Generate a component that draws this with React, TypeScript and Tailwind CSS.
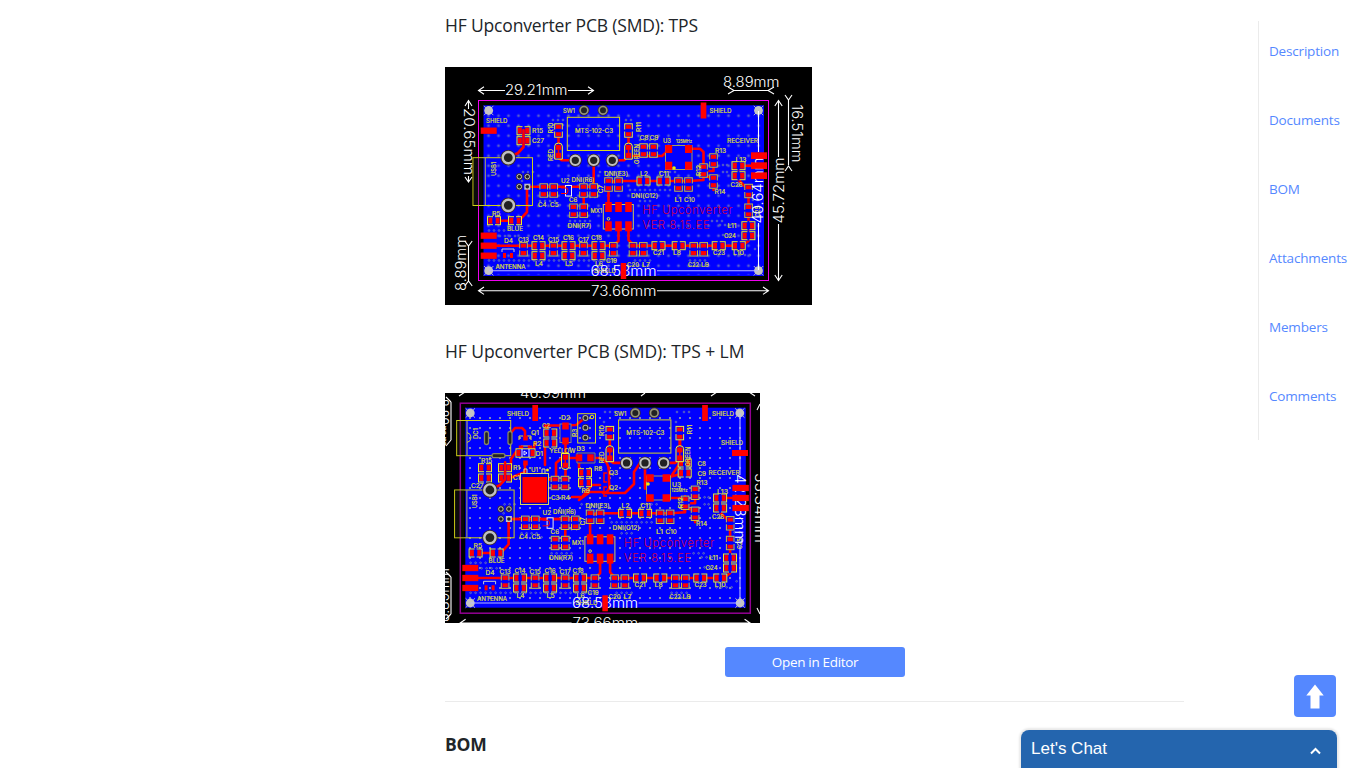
import React from "react";

type Pt = [number, number];
type LabelRow = [string, number, number, number, number?, boolean?];

const SILK = "#dcdc3c";
const sections = ["Description", "Documents", "BOM", "Attachments", "Members", "Comments"];

/* Label: text, left, baseline, drawn width, font size, rotated */
function Label({ row, fill = SILK }: { row: LabelRow; fill?: string }) {
  const [text, x, y, w, size = 6.6, up = false] = row;
  return (
    <text
      x={x}
      y={y}
      fontSize={size}
      fill={fill}
      stroke={fill}
      strokeWidth="0.22"
      textLength={w}
      lengthAdjust="spacingAndGlyphs"
      transform={up ? `rotate(-90 ${x} ${y})` : undefined}
    >
      {text}
    </text>
  );
}

function Labels({ rows }: { rows: LabelRow[] }) {
  return (
    <>
      {rows.map((row, i) => (
        <Label key={i} row={row} />
      ))}
    </>
  );
}

function Flat({ at }: { at: Pt[] }) {
  return (
    <>
      {at.map(([x, y], i) => (
        <g key={i}>
          <rect x={x - 6.5} y={y - 4} width="13" height="8" fill="#00f" stroke="#f0f020" strokeWidth="1" />
          <rect x={x - 5.6} y={y - 2.9} width="3.9" height="5.8" fill="#f00" />
          <rect x={x + 1.7} y={y - 2.9} width="3.9" height="5.8" fill="#f00" />
          <path d={`M${x} ${y - 5}v10`} stroke="#00f" strokeWidth="2" />
        </g>
      ))}
    </>
  );
}

function Upright({ at, color = "#c8bf3c" }: { at: Pt[]; color?: string }) {
  return (
    <>
      {at.map(([x, y], i) => (
        <g key={i}>
          <rect x={x - 3.8} y={y - 6.7} width="7.6" height="13.4" fill="#00f" stroke={color} strokeWidth="1" />
          <rect x={x - 2.7} y={y - 5.7} width="5.4" height="4" fill="#f00" />
          <rect x={x - 2.7} y={y + 1.7} width="5.4" height="4" fill="#f00" />
          <path d={`M${x - 5} ${y}h10`} stroke="#00f" strokeWidth="2" />
        </g>
      ))}
    </>
  );
}

function Led({ x, y }: { x: number; y: number }) {
  return (
    <g>
      <path d={`M${x - 3.8} ${y + 7.8}v-13q0-3 3.8-3t3.8 3v13z`} fill="#00f" stroke="#ff2" />
      <rect x={x - 2.7} y={y - 6.5} width="5.4" height="5" fill="#f00" />
      <rect x={x - 2.7} y={y + 1.5} width="5.4" height="5.3" fill="#f00" />
      <path d={`M${x} ${y - 2}v4`} stroke="#f00" strokeWidth="1.6" />
    </g>
  );
}

function Pads({ at, w, h }: { at: Pt[]; w: number; h: number }) {
  return (
    <>
      {at.map(([x, y], i) => (
        <rect key={i} x={x - w / 2} y={y - h / 2} width={w} height={h} fill="#f00" />
      ))}
    </>
  );
}

function Ring({ x, y, r, rim = "#c0c0c0" }: { x: number; y: number; r: number; rim?: string }) {
  return (
    <g>
      <circle cx={x} cy={y} r={r + 0.5} fill="#3a2828" />
      <circle cx={x} cy={y} r={r * 0.78} fill="#222" stroke={rim} strokeWidth={r * 0.34} />
    </g>
  );
}

function Mount({ x, y }: { x: number; y: number }) {
  return (
    <g>
      <path d={`M${x - 4.7} ${y - 4.7}l9.400 9.400m0-9.400l-9.400 9.400`} stroke="#bbb" strokeWidth="1" />
      <circle cx={x} cy={y} r="4.400" fill="#c4c4c4" />
    </g>
  );
}

function Vias({ rows }: { rows: [number, number, number, number?][] }) {
  return (
    <g fill="#1a28c8" stroke="#7f8ac0" strokeWidth="0.6">
      {rows.flatMap(([x, y, n, step = 5], i) =>
        Array.from({ length: n }, (_, k) => <circle key={`${i}-${k}`} cx={x + k * step} cy={y} r="0.9" />)
      )}
    </g>
  );
}

function Trace({ d }: { d: string }) {
  return <path d={d} fill="none" stroke="#f00" strokeWidth="2.6" strokeLinecap="round" strokeLinejoin="round" />;
}

function Dim({ d, color = "#fff" }: { d: string; color?: string }) {
  return <path d={d} fill="none" stroke={color} strokeWidth="1.1" />;
}

/* Switch block with its resistors and LEDs, shared by both boards */
function SwitchBlock() {
  return (
    <g>
      <Trace d="M558.5 130V158L562 160.3H575M593.7 160V186M612 160.3H624L628.5 156V130" />
      <rect x="567.3" y="117.3" width="52.3" height="33.2" fill="none" stroke="#d8d820" />
      <Upright at={[[558.5, 130.5], [628.5, 130.5]]} color="#f0ec32" />
      <Led x={558.5} y={151.3} />
      <Led x={628.5} y={151.3} />
      {[575.3, 593.7, 612.3].map((x) => (
        <Ring key={x} x={x} y={160.3} r={6} />
      ))}
      <Ring x={584} y={110.3} r={4.9} rim="#93937c" />
      <Ring x={603} y={110.3} r={4.9} rim="#93937c" />
      <Labels
        rows={[
          ["SW1", 563, 113, 12],
          ["MTS-102-C3", 575, 132.5, 38, 6],
          ["R10", 552.5, 133.5, 11, 6.6, true],
          ["RED", 552.5, 161, 12, 6.6, true],
          ["R11", 640.5, 132, 10, 6.6, true],
          ["GREEN", 639, 164, 20, 6.6, true],
        ]}
      />
    </g>
  );
}

/* Lower and right part of the circuit */
function MixerSection() {
  return (
    <g>
      <Vias
        rows={[
          [485, 236, 7], [489, 230.5, 4], [489, 260.5, 26], [523, 172, 2], [522, 181, 1],
          [540, 201, 4], [570, 221, 5], [630, 190, 9], [640, 201, 3], [635, 260.5, 4],
          [633, 265.5, 4], [690, 260.5, 4], [690, 265.5, 4], [723, 165, 2, 4], [723, 172, 2, 4],
          [720, 225, 3], [712, 221, 3], [723, 235, 2], [753, 200, 2], [755, 249, 1], [735, 255, 4],
          [533, 172, 1], [600, 172, 5], [660, 172, 4], [560, 205, 1], [590, 197, 2],
        ]}
      />
      <Trace d="M490 245.7H613L618.5 241V226M628.5 230V240L634 245.7H742L748.5 241V190L738.5 180V165.7H760M738.5 175.7H744M608.5 207V187L614 181H672L678 181H690L703.5 180V164M703.5 171H713.5V160M704 176L713.5 178V190M527 188V212L519 220.7H494M528 186.7H597M583.7 191V216M508 157.7L518 153L523.5 147V130" />
      <rect x="473" y="157.7" width="59.5" height="47.8" fill="none" stroke="#d0d018" />
      <path d="M485.3 158v47" stroke="#b0b050" />
      <path d="M478 158v47" stroke="#222" strokeWidth="9" opacity=".35" />
      <Ring x={508.3} y={157.7} r={7.2} />
      <Ring x={508.3} y={205.3} r={7.2} />
      <Ring x={519.3} y={176.7} r={2.9} />
      <Ring x={527.3} y={176.7} r={2.9} />
      <Ring x={519.3} y={186.7} r={2.9} />
      <rect x="524.3" y="183.7" width="6" height="6" fill="#c0c0c0" />
      <circle cx="527.3" cy="186.7" r="1.8" fill="#222" />
      <Flat
        at={[
          [494, 220.7], [515, 220.7], [538.5, 245.7], [538.5, 255.7], [568.5, 245.7], [568.5, 255.7],
          [598.5, 245.7], [598.5, 255.7], [658.5, 245.7], [678.7, 245.7], [718.7, 245.7], [738.7, 245.7],
          [748.4, 225.7], [748.4, 235.7], [643.5, 181], [663.5, 181], [738.5, 165.7], [738.5, 175.7],
        ]}
      />
      <Upright
        at={[
          [523.5, 249.3], [553.5, 249.3], [583.5, 249.3], [613.3, 249.3], [633, 249.3], [643.3, 249.3],
          [693.7, 249.3], [703.7, 249.3], [543.7, 190.5], [553.7, 190.5], [583.5, 190.5], [593.7, 190.5],
          [573.5, 210.7], [583.7, 210.7], [608.5, 184.5], [618.5, 184.5], [678.5, 184.5], [688.5, 184.5],
          [703.5, 170.5], [713.5, 160.5], [713.5, 181.5], [748.6, 191], [748.6, 210.7],
        ]}
      />
      <rect x="565.5" y="185.5" width="6" height="10.5" fill="#00f" stroke="#eee" />
      <path d="M561 188h6q2 2.500 0 5.500h-6" fill="none" stroke="#f00" />
      <rect x="603.3" y="204.500" width="30" height="24.500" fill="#00f" stroke="#d0d050" />
      <Pads at={[[608.500, 207], [618.500, 207], [628.500, 207], [608.500, 226.300], [618.500, 226.300], [628.500, 226.300]]} w={6.600} h={10} />
      <circle cx="608.500" cy="218.800" r="1.300" fill="none" stroke="#ee2" />
      <Pads at={[[488.700, 235.700], [488.700, 245.700], [488.700, 255.700], [759, 155.700], [759, 165.700], [759, 175.700]]} w={16} h={6.300} />
      <path d="M502 249h12M502 249v3m12-3v3" stroke="#ccc" fill="none" />
      <Pads at={[[504.500, 255.500], [511.500, 255.500]]} w={3} h={5} />
      <Labels
        rows={[
          ["USB1", 495.5, 176, 14, 6.6, true],
          ["U2", 561, 183, 8.5],
          ["DNI(R6)", 571.5, 181.5, 23],
          ["C4", 538, 207, 8.5],
          ["C5", 550, 207, 8.5],
          ["C6", 569, 202, 8.5],
          ["C7", 603, 193, 8, 6.6, true],
          ["DNI(R7)", 567.5, 228, 24],
          ["MX1", 590.5, 213, 11.5],
          ["R5", 492, 215.500, 8.5],
          ["BLUE", 507, 231, 16],
          ["D4", 504, 242.5, 9],
          ["C13", 518, 241.5, 11],
          ["C14", 533, 240.300, 11],
          ["C15", 548, 241.500, 11],
          ["C16", 563, 240.300, 11],
          ["C17", 578, 241.500, 11],
          ["C18", 591, 240.300, 11],
          ["L4", 535, 265.500, 8],
          ["L5", 565, 265.500, 8],
          ["L6", 595, 265.500, 8],
          ["C19", 606, 263, 11],
          ["ANTENNA", 495.500, 269, 30],
          ["DNI(E3)", 604, 176, 24],
          ["L2", 640, 176, 8],
          ["C11", 659, 176, 10],
          ["DNI(C12)", 631, 198, 27],
          ["L1", 674.500, 202, 7],
          ["C10", 684, 202, 11],
          ["R13", 715, 152.500, 11],
          ["R14", 714.500, 193.500, 11],
          ["R12", 701, 176, 11, 6.600, true],
          ["RECEIVER", 727, 143, 31],
          ["L13", 735.500, 161.500, 11],
          ["C26", 730.500, 187, 12],
          ["L11", 727.500, 228, 9],
          ["C24", 724, 237.800, 12],
          ["C25", 760, 217, 11, 6.600, true],
          ["C20", 627, 267, 12],
          ["L7", 642, 267, 8],
          ["C21", 653, 255, 11],
          ["L8", 673, 255, 8],
          ["C22", 688, 267, 11],
          ["L9", 701, 267, 8],
          ["C23", 713, 255, 12],
          ["L10", 733, 255, 11],
        ]}
      />
      <g fill="#d0004c" fontSize="11" fontWeight="300">
        <text x="642.500" y="214.300" textLength="90">HF Upconverter</text>
        <text x="642.500" y="229.300" textLength="67">VER 8.15.EE</text>
      </g>
      <Mount x={488.700} y={270.700} />
      <Mount x={758.500} y={270.700} />
      <Label row={["SHIELD", 594, 273, 22]} />
      <Dim color="#b9b9ff" d="M489 270.700H590M657 270.700H758" />
      <Dim d="M590 290.700H478.500M657 290.700H768.500M484 287l-5.500 3.700 5.500 3.700M763 287l5.500 3.700-5.500 3.700" />
      <g fill="#fff" fontSize="13.800" fontWeight="300">
        <text x="590.500" y="275.500" textLength="66" lengthAdjust="spacingAndGlyphs">68.53mm</text>
        <text x="591" y="295.500" textLength="65.500" lengthAdjust="spacingAndGlyphs">73.66mm</text>
      </g>
      <Pads at={[[623.500, 271]]} w={5.500} h={16} />
    </g>
  );
}

function DimText({ x, y, w, turn = 0, children }: { x: number; y: number; w: number; turn?: number; children: string }) {
  return (
    <text
      x={x}
      y={y}
      textLength={w}
      lengthAdjust="spacingAndGlyphs"
      fill="#fff"
      fontSize="13.8"
      fontWeight="300"
      transform={turn ? `rotate(${turn} ${x} ${y})` : undefined}
    >
      {children}
    </text>
  );
}

function BoardTps() {
  return (
    <svg className="block h-[238px] w-[367px]" viewBox="445 67 367 238" fontFamily="Inter, 'Liberation Sans', sans-serif">
      <defs>
        <pattern id="viasA" x="483.5" y="110.700" width="10" height="10" patternUnits="userSpaceOnUse">
          <circle cx="5" cy="5" r="1" fill="#1822c8" stroke="#838bc0" strokeWidth="0.700" />
        </pattern>
      </defs>
      <rect x="445" y="67" width="367" height="238" fill="#000" />
      <rect x="483.500" y="105.300" width="280.500" height="170.700" fill="#00f" />
      <rect x="485" y="111" width="277" height="164" fill="url(#viasA)" />
      <rect x="478.500" y="100.500" width="290" height="180" fill="none" stroke="#f000f0" strokeWidth="1" />
      <Trace d="M630 156H662L668.700 150M688 148.700H700L703.500 152V166" />
      <Vias rows={[[553, 120, 3], [553, 125, 3], [640, 140, 4], [626, 120, 2], [626, 125, 2]]} />
      <Flat at={[[523.500, 130.700], [523.500, 140.700]]} />
      <Upright at={[[643.500, 150.500], [653.500, 150.500]]} color="#dcd832" />
      <rect x="665.500" y="145.500" width="26.500" height="24" fill="#00f" stroke="#a0a060" />
      <Pads at={[[668.700, 149], [688.500, 149], [668.700, 165.700], [688.500, 165.700]]} w={7} h={8} />
      <circle cx="674" cy="168" r="1.800" fill="#ee0" />
      <SwitchBlock />
      <MixerSection />
      <Pads at={[[488.700, 130.700]]} w={16} h={6.300} />
      <Pads at={[[703.500, 110.500]]} w={5.700} h={16} />
      <Labels
        rows={[
          ["SHIELD", 486, 122.700, 21.500],
          ["R15", 532, 133, 11],
          ["C27", 532, 143, 12],
          ["C8", 639.500, 140, 9],
          ["C9", 649.500, 140, 9],
          ["U3", 663, 142.700, 8],
          ["125MHz", 676, 142.500, 16, 5],
          ["SHIELD", 709.500, 113, 22],
        ]}
      />
      <Mount x={488.700} y={110.500} />
      <Mount x={758.500} y={110.500} />
      <Dim d="M758.500 111V152M758.500 223V270M505 90.500H478.500M568 90.500H593.500M484 86.800l-5.500 3.700 5.500 3.700M588 86.800l5.500 3.700-5.500 3.700M733 90.500H769M728 87l6 3.500-6 3.500M774 87l-6 3.500 6 3.500M788.500 100V165M785 95l3.500 5 3.500-5M785 171l3.500-5 3.500 5M778.500 101V157M778.500 224V280M774.800 106l3.700-5.500 3.700 5.500M774.800 275l3.700 5.500 3.700-5.500M468.500 101v8M468.500 176v5.500M465 106l3.500-5.500 3.500 5.500M465 177l3.500 5 3.500-5M468.500 245V282M464.800 241l3.700 5 3.700-5M464.800 286l3.700-5 3.700 5" />
      <DimText x={505} y={95} w={62.5}>29.21mm</DimText>
      <DimText x={723} y={87} w={56.5}>8.89mm</DimText>
      <DimText x={792} y={104.5} w={58} turn={90}>16.51mm</DimText>
      <DimText x={464} y={108} w={67} turn={90}>20.65mm</DimText>
      <DimText x={465.5} y={291} w={56} turn={-90}>8.89mm</DimText>
      <DimText x={783.5} y={223.5} w={66} turn={-90}>45.72mm</DimText>
      <DimText x={762.5} y={223.5} w={66} turn={-90}>40.64mm</DimText>
      <Pads at={[[759, 155.700], [759, 165.700], [759, 175.700]]} w={16} h={6.300} />
    </svg>
  );
}

function BoardTpsLm() {
  return (
    <svg className="block h-[230px] w-[315px]" viewBox="445 393 315 230" fontFamily="Inter, 'Liberation Sans', sans-serif">
      <defs>
        <pattern id="viasB" x="465" y="413" width="10" height="10" patternUnits="userSpaceOnUse">
          <rect x="4" y="4" width="2" height="2" fill="#7f86b8" />
        </pattern>
      </defs>
      <rect x="445" y="393" width="315" height="230" fill="#000" />
      <rect x="465.300" y="407.700" width="280.500" height="200" fill="#00f" />
      <rect x="468" y="413" width="277" height="193" fill="url(#viasB)" />
      <rect x="460.300" y="403.200" width="290" height="210" fill="none" stroke="#930093" strokeWidth="1.500" />
      <Vias rows={[[605, 412, 3], [684, 412, 2], [677, 412, 1], [697, 510, 1], [604, 422, 1], [676, 422, 1]]} />
      <Trace d="M510 434L515 428H522L525 431V435M550 433L545 425.500H566L576 425L585 418M545 443V465M565.500 442V480M576 458H562L556 463V483M579 458V468L583 473M590 458H600Q609 461 609 472V482Q611 492 603 493H625L634 484V472L640 463M525 463V472L510 478M516 452L511 459V468M533 452L535 443M548 480L556 477M572 497L582 497L592 485H600M509 519H580M579 500L590 492H603M680 440V463L670 478M666 478L684 473M666 498H684V510" />
      <Flat at={[[485, 467.700], [485, 478], [505, 467.700], [505, 478], [550.300, 433], [550.300, 443], [585, 472.700], [585, 482.700], [684.700, 463], [684.700, 473]]} />
      <Upright at={[[555, 483], [565, 483]]} />
      <g transform="translate(51.300 302.600)">
        <SwitchBlock />
      </g>
      <rect x="646.500" y="476" width="24" height="24" fill="#00f" stroke="#a0a060" />
      <Pads at={[[650, 478], [666.300, 478], [650, 498], [666.300, 498]]} w={7.500} h={7.500} />
      <circle cx="648" cy="484" r="1.800" fill="#ee0" />
      <g transform="translate(-18.400 332.300)">
        <MixerSection />
      </g>
      <rect x="456.700" y="420.500" width="54" height="35.200" fill="none" stroke="#d0d018" />
      <path d="M461 421v34" stroke="#222" strokeWidth="8" opacity=".35" />
      <path d="M467 421v34M467 432.500q4 1 4 5t-4 5" fill="none" stroke="#c8c840" />
      <g fill="#222" stroke="#85856a" strokeWidth="1.300">
        <rect x="484.500" y="431.500" width="4" height="13" rx="2" />
        <rect x="508" y="431.500" width="4" height="13" rx="2" />
        <rect x="492" y="453.700" width="13" height="4" rx="2" />
      </g>
      <path d="M519 440v-4h4m4 0h4v4M521 446h9" fill="none" stroke="#eee020" />
      <Pads at={[[525.500, 438], [521, 448], [530, 448], [525.500, 463]]} w={4.500} h={5} />
      <rect x="516" y="448.800" width="19" height="8.400" fill="#00f" stroke="#ee2" />
      <Pads at={[[518.500, 453], [532.500, 453]]} w={4} h={6} />
      <path d="M522 449v8M527 453l-3-2v4zM529 449v8" fill="none" stroke="#fff" strokeWidth="0.900" />
      <rect x="560" y="424" width="11" height="18.500" fill="#00f" stroke="#8a8a72" />
      <path d="M577 453v10h18v-10z" fill="#00f" stroke="#8a8a50" />
      <Pads at={[[565.500, 426], [565.500, 441], [579, 457.800], [590.500, 457.800]]} w={6.500} h={7} />
      <rect x="577.700" y="413.700" width="17.800" height="29.300" fill="none" stroke="#d8d820" />
      {[418, 427.700, 437.600].map((y) => (
        <Ring key={y} x={585.400} y={y} r={3.100} rim="#aaa" />
      ))}
      <circle cx="592" cy="417" r="1.800" fill="none" stroke="#ee0" />
      <g transform="rotate(180 565.300 461.300)">
        <Led x={565.300} y={461.300} />
      </g>
      <rect x="520.500" y="473.500" width="28" height="31" fill="#00c" stroke="#dada60" />
      <rect x="522.500" y="477" width="24.500" height="25.700" fill="#f00" />
      <path d="M524 473v-4h3v4M542 473v-4h3v4" fill="none" stroke="#dcdc90" />
      <circle cx="547.500" cy="470" r="1.500" fill="#ee0" />
      <path d="M607 473h-3v9h3M607 487h-3v9h3" fill="none" stroke="#f00" strokeWidth="1.500" />
      <Labels
        rows={[
          ["SHIELD", 507, 415.500, 22],
          ["DC1", 478, 439, 11, 6.600, true],
          ["Q1", 531, 434.500, 8],
          ["C2", 542, 427.700, 8],
          ["R2", 533, 445.500, 8.500],
          ["D1", 535.500, 455.500, 7.500],
          ["D2", 561, 420, 9],
          ["R3", 577, 437, 8.500, 6.600, true],
          ["YELLOW", 549.500, 452.700, 26],
          ["D3", 576.500, 451, 8.500],
          ["R15", 481, 463.300, 11],
          ["R1", 513, 470.300, 7],
          ["C1", 513, 480.300, 7],
          ["C27", 471, 488, 12.500],
          ["U1", 531, 471.500, 7],
          ["R8", 594, 470.500, 8.500],
          ["R9", 581.500, 493, 8.500],
          ["C3", 551, 500, 8.500],
          ["R4", 561, 500, 9],
          ["Q3", 609, 474.500, 9],
          ["Q2", 609, 489.500, 9],
          ["U3", 672, 486.500, 9],
          ["125MHz", 671.500, 492, 16, 5],
          ["C8", 697.500, 465.500, 8.500],
          ["C9", 697.500, 475.500, 8.500],
          ["SHIELD", 712, 415.500, 22],
          ["SHIELD", 721, 445, 22],
        ]}
      />
      <Mount x={470.300} y={413} />
      <Mount x={739.800} y={413} />
      <Dim color="#b9b9ff" d="M740 413V475M740 545V603" />
      <Dim d="M459 396l6-4M641 396l4-3M711 396l6-4M749 392l6 4M451 402V440M446 446l5-6M446 397l5 5M451 577V614M446 572l5 5M446 619l5-5M760 404l-3 6M760 614l-3-6" />
      <DimText x={520} y={397.5} w={66}>46.99mm</DimText>
      <DimText x={735} y={474} w={70} turn={90}>42.28mm</DimText>
      <DimText x={755} y={473} w={70} turn={90}>55.34mm</DimText>
      <DimText x={438} y={399} w={48} turn={90}>8.89mm</DimText>
      <DimText x={448.5} y={622} w={54} turn={-90}>8.89mm</DimText>
      <Pads at={[[535.200, 413], [705, 413]]} w={5.700} h={16} />
      <Pads at={[[740, 453], [740.600, 488], [740.600, 498], [740.600, 508]]} w={16} h={6} />
    </svg>
  );
}

export default function App() {
  return (
    <div className="relative flex h-[768px] w-[1348px] overflow-hidden bg-white font-['Open_Sans','Noto_Sans',sans-serif] text-[#212529]">
      <main className="ml-[445px] flex w-[739px] shrink-0 flex-col">
        <h2 className="mt-3 h-[26px] text-[17.5px] leading-[26px] tracking-[-0.17px] whitespace-nowrap">HF Upconverter PCB (SMD): TPS</h2>
        <div className="mt-[29px]">
          <BoardTps />
        </div>
        <h2 className="mt-[33px] h-[26px] text-[17.5px] leading-[26px] tracking-[-0.07px] whitespace-nowrap">HF Upconverter PCB (SMD): TPS + LM</h2>
        <div className="mt-[29px]">
          <BoardTpsLm />
        </div>
        <button className="mt-6 ml-[280px] h-[30px] w-[180px] shrink-0 rounded-[3px] bg-[#5588ff] text-[13.5px] tracking-[-0.32px] text-white">Open in Editor</button>
        <hr className="mt-6 border-[#ebebeb]" />
        <h3 className="mt-[29px] text-[17.5px] leading-[26px] font-bold tracking-[-0.2px]">BOM</h3>
      </main>
      <nav className="mt-[21px] ml-[74px] flex h-[419px] shrink-0 flex-col gap-12 border-l border-[#ebebeb] pt-5 pl-2.5">
        {sections.map((name) => (
          <a key={name} className="h-[21px] text-[13.5px] leading-[21px] tracking-[-0.18px] whitespace-nowrap text-[#5588ff]">
            {name}
          </a>
        ))}
      </nav>
      <button className="absolute top-[675px] left-[1294px] flex h-[42px] w-[42px] items-center justify-center rounded bg-[#5588ff]" aria-label="Back to top">
        <svg className="h-[25px] w-[18px]" viewBox="0 0 18 25" fill="#fff">
          <path d="M9 0.500L17.700 11.500H13.500V24.500H4.500V11.500H0.300Z" />
        </svg>
      </button>
      <div className="absolute top-[730px] left-[1021px] flex h-[38px] w-[316px] items-center justify-between rounded-t-lg bg-[#2465ae] pr-4 pl-2.5 font-['Liberation_Sans',sans-serif] text-[17px] text-white shadow-[0_0_2px_2px_rgba(0,0,0,0.09)]">
        <span>Let's Chat</span>
        <svg className="mt-1 h-[8px] w-[11px]" viewBox="0 0 11 8" fill="none" stroke="#fff" strokeWidth="2">
          <path d="M1 6.500L5.500 2L10 6.500" />
        </svg>
      </div>
    </div>
  );
}
